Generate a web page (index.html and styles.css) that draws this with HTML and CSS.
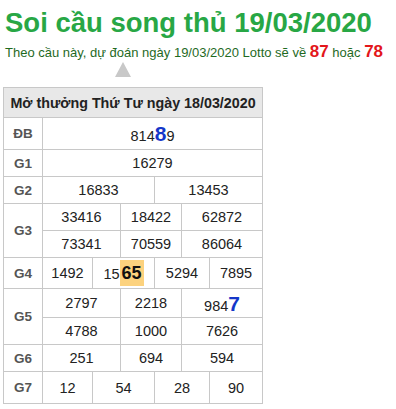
FILE: index.html
```html
<!DOCTYPE html>
<html lang="vi">
<head>
<meta charset="utf-8">
<link rel="stylesheet" href="styles.css">
</head>
<body>
<div class="page">
  <h1 class="title">Soi cầu song thủ 19/03/2020</h1>
  <p class="lead">Theo cầu này, dự đoán ngày 19/03/2020 Lotto sẽ về <b class="hot">87</b> hoặc <b class="hot">78</b></p>
  <div class="arrow-wrap"><span class="arrow"></span></div>
  <table class="kq">
    <colgroup>
      <col class="c0"><col class="c1"><col class="c2"><col class="c3"><col class="c4"><col class="c5"><col class="c6">
    </colgroup>
    <thead>
      <tr><th colspan="7" class="head">Mở thưởng Thứ Tư ngày 18/03/2020</th></tr>
    </thead>
    <tbody>
      <tr class="r-db"><td class="lbl">ĐB</td><td colspan="6">814<span class="mark">8</span>9</td></tr>
      <tr><td class="lbl">G1</td><td colspan="6">16279</td></tr>
      <tr><td class="lbl">G2</td><td colspan="3">16833</td><td colspan="3">13453</td></tr>
      <tr><td class="lbl" rowspan="2">G3</td><td colspan="2">33416</td><td colspan="2">18422</td><td colspan="2">62872</td></tr>
      <tr><td colspan="2">73341</td><td colspan="2">70559</td><td colspan="2">86064</td></tr>
      <tr class="r-g4"><td class="lbl">G4</td><td>1492</td><td colspan="2">15<span class="hl">65</span></td><td colspan="2">5294</td><td>7895</td></tr>
      <tr class="r-g5a"><td class="lbl" rowspan="2">G5</td><td colspan="2">2797</td><td colspan="2">2218</td><td colspan="2">984<span class="mark">7</span></td></tr>
      <tr><td colspan="2">4788</td><td colspan="2">1000</td><td colspan="2">7626</td></tr>
      <tr><td class="lbl">G6</td><td colspan="2">251</td><td colspan="2">694</td><td colspan="2">594</td></tr>
      <tr class="r-g7"><td class="lbl">G7</td><td>12</td><td colspan="2">54</td><td colspan="2">28</td><td>90</td></tr>
    </tbody>
  </table>
</div>
</body>
</html>
```
FILE: styles.css
```css
html, body {
  margin: 0;
  padding: 0;
  background: #fff;
}
body {
  font-family: "Liberation Sans", Arial, sans-serif;
  color: #222;
}
.page {
  padding: 7px 3px 0 5px;
}
.title {
  margin: 0;
  font-size: 27.5px;
  line-height: 32px;
  font-weight: bold;
  color: #28a745;
}
.lead {
  margin: 4px 0 0 0;
  font-size: 13px;
  line-height: 17px;
  height: 17px;
  color: #1f6a1f;
  white-space: nowrap;
}
.hot {
  color: #e3161b;
  font-size: 17px;
  line-height: 1;
}
.arrow-wrap {
  height: 27px;
  padding-left: 110px;
  display: flex;
  align-items: flex-end;
}
.arrow {
  width: 0;
  height: 0;
  border-left: 8px solid transparent;
  border-right: 8px solid transparent;
  border-bottom: 15px solid #c8c8c8;
  margin-bottom: 10px;
}
.kq {
  margin-left: -2px;
  border-collapse: collapse;
  table-layout: fixed;
  width: 260px;
  font-size: 14.5px;
}
.c0 { width: 39px; }
.c1 { width: 50px; }
.c2 { width: 28px; }
.c3 { width: 34px; }
.c4 { width: 27px; }
.c5 { width: 28px; }
.c6 { width: 53px; }
.kq th, .kq td {
  border: 1px solid #c8c8c8;
  text-align: center;
  padding: 0;
  height: 26px;
  white-space: nowrap;
}
.kq .head {
  background: #e8e8e8;
  font-weight: bold;
  font-size: 14.3px;
  height: 29px;
  color: #222;
}
.kq .lbl {
  font-weight: bold;
  color: #555;
  font-size: 13.5px;
}
.r-db td { height: 31px; }
.r-g4 td { height: 30px; }
.r-g5a td { height: 28px; }
.r-g7 td { height: 31px; }
.mark {
  color: #1537c9;
  font-weight: bold;
  font-size: 21px;
  line-height: 1;
}
.hl {
  background: #fcd27e;
  font-weight: bold;
  font-size: 18px;
  color: #111;
  padding: 3px 2px;
}
```
